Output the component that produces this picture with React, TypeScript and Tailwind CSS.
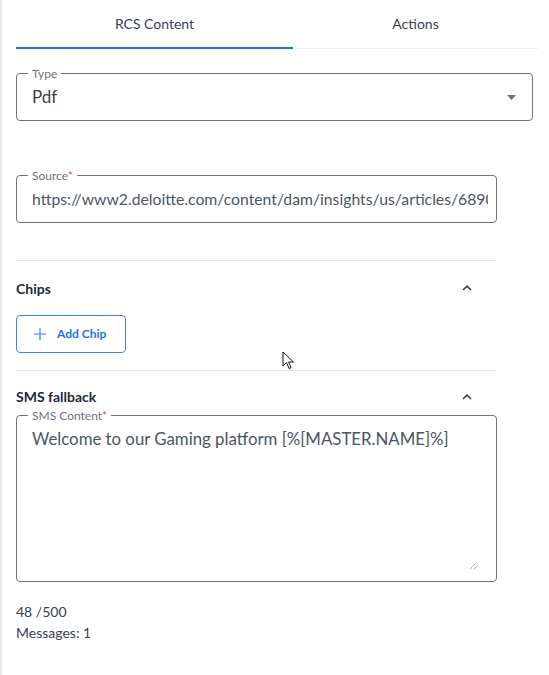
import React from "react";

function OutlinedBox({
  label,
  required,
  className,
  children,
}: {
  label: string;
  required?: boolean;
  className: string;
  children: React.ReactNode;
}) {
  return (
    <div className={`relative rounded-[4px] border border-[#6b7280] ${className}`}>
      <span className="absolute -top-[7px] left-[11px] bg-white px-[4px] text-[12px] leading-[13px] text-[#6b7280]">
        {label}
        {required && <span className="text-[#ef4444]">*</span>}
      </span>
      {children}
    </div>
  );
}

function Caret() {
  return (
    <svg width="10" height="6" viewBox="0 0 10 6" className="mr-[25px]">
      <path d="M1 5 L5 1.2 L9 5" fill="none" stroke="#374151" strokeWidth="1.6" />
    </svg>
  );
}

export default function App() {
  return (
    <div
      className="relative min-h-[675px] border-l-2 border-[#e5e7eb] bg-white pl-[14px] pr-[11px]"
      style={{ fontFamily: "Lato, 'Open Sans', sans-serif" }}
    >
      {/* tabs */}
      <div className="flex h-[49px] border-b border-[#f0f0f0]">
        <div className="relative flex w-[277px] items-center justify-center pb-[2px] text-[14px] text-[#374151]">
          RCS Content
          <div className="absolute bottom-[-1px] left-0 right-0 h-[2px] bg-[#1a73e8]" />
        </div>
        <div className="flex flex-1 items-center justify-center pb-[2px] text-[14px] text-[#374151]">
          Actions
        </div>
      </div>

      {/* type */}
      <OutlinedBox label="Type" className="mt-[24px] flex h-[48px] w-[517px] items-center justify-between">
        <span className="pl-[15px] text-[17px] text-[#374151]">Pdf</span>
        <svg width="9" height="5" viewBox="0 0 9 5" className="mr-[16px]">
          <path d="M0 0 L9 0 L4.5 5 Z" fill="#6b7280" />
        </svg>
      </OutlinedBox>

      {/* source */}
      <OutlinedBox label="Source" required className="mt-[54px] flex h-[48px] w-[481px] items-center">
        <input
          readOnly
          value="https://www2.deloitte.com/content/dam/insights/us/articles/6890_Digital-transformation/DI_Digital-transformation.pdf"
          className="w-full bg-transparent pl-[15px] pr-[8px] text-[15.75px] text-[#4b5563] outline-none"
          style={{ fontFamily: "Lato, 'Open Sans', sans-serif" }}
        />
      </OutlinedBox>

      <div className="mt-[37px] w-[481px] border-t border-[#e5e7eb]" />

      {/* chips */}
      <div className="flex h-[54px] w-[481px] items-center justify-between">
        <span className="text-[14px] font-bold text-[#1f2937]">Chips</span>
        <Caret />
      </div>
      <button className="flex h-[38px] w-[110px] items-center gap-[10px] rounded-[4px] border border-[#3b82f6] pl-[16px] text-[12px] font-bold text-[#1a73e8]">
        <svg width="14" height="14" viewBox="0 0 14 14">
          <path d="M7 1 V13 M1 7 H13" stroke="#60a5fa" strokeWidth="1.6" />
        </svg>
        Add Chip
      </button>

      <div className="mt-[17px] w-[481px] border-t border-[#e5e7eb]" />

      {/* sms fallback */}
      <div className="flex h-[44px] w-[481px] items-center justify-between pt-[7px]">
        <span className="text-[14px] font-bold text-[#1f2937]">SMS fallback</span>
        <Caret />
      </div>
      <OutlinedBox label="SMS Content" required className="h-[167px] w-[481px]">
        <div className="pl-[15px] pt-[13px] text-[16.8px] leading-[20px] text-[#4b5563]">
          Welcome to our Gaming platform [%[MASTER.NAME]%]
        </div>
        <svg width="9" height="9" viewBox="0 0 9 9" className="absolute bottom-[11px] right-[18px]">
          <path d="M1 8 L8 1 M5 8 L8 5" stroke="#6b7280" strokeWidth="1" strokeDasharray="1 1" />
        </svg>
      </OutlinedBox>

      <div className="mt-[20px] text-[14px] leading-[20px] text-[#374151]">48 /500</div>
      <div className="mt-[1px] text-[14px] leading-[20px] text-[#374151]">Messages: 1</div>

      {/* mouse pointer */}
      <svg width="14" height="20" viewBox="0 0 14 20" className="absolute left-[280px] top-[351px]">
        <path d="M1 1 L1 15 L4.5 11.5 L7 17.5 L9 16.6 L6.6 11 L11.5 11 Z" fill="white" stroke="#111" strokeWidth="1" />
      </svg>
    </div>
  );
}
